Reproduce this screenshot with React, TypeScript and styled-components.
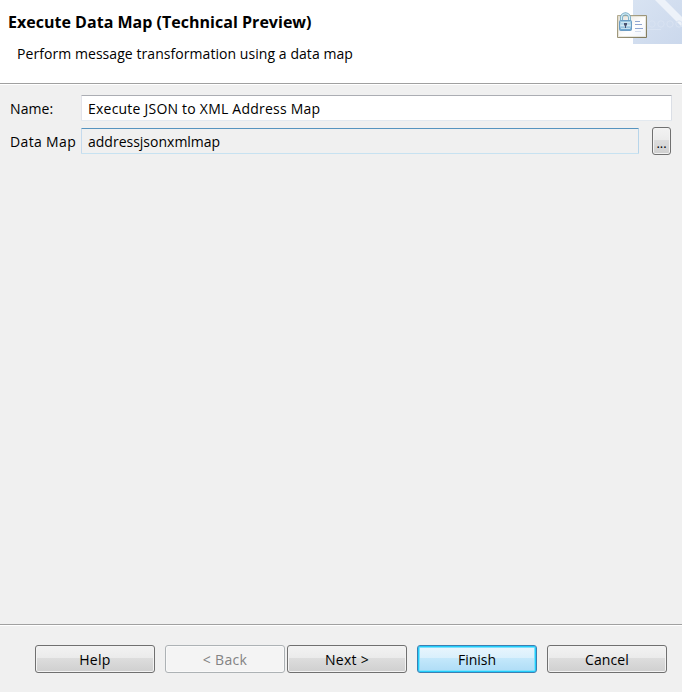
import React from "react";
import styled, { createGlobalStyle, css } from "styled-components";

const GlobalStyle = createGlobalStyle`
  * { box-sizing: border-box; }
  html, body { margin: 0; padding: 0; background: #f0f0f0; }
  body { font-family: "Open Sans", "Noto Sans", sans-serif; font-size: 14px; color: #000; overflow: hidden; }
`;

const Dialog = styled.div`
  display: flex;
  flex-direction: column;
  width: 682px;
  height: 692px;
  background: #f0f0f0;
`;

const Header = styled.header`
  display: flex;
  justify-content: space-between;
  height: 84px;
  background: #fff;
  border-bottom: 1px solid #a0a0a0;
`;

const Heading = styled.div`
  padding: 12px 0 0 8px;
`;

const Title = styled.h1`
  margin: 0;
  font-size: 16px;
  line-height: 20px;
  font-weight: 700;
  white-space: nowrap;
`;

const Subtitle = styled.p`
  margin: 12px 0 0 9px;
  line-height: 20px;
  white-space: nowrap;
`;

const Label = styled.span<{ $spacing?: number }>`
  display: inline-block;
  white-space: nowrap;
  letter-spacing: ${(p) => p.$spacing ?? 0}px;
`;

const Banner = styled.svg`
  display: block;
  width: 80px;
  height: 50px;
`;

const Form = styled.main`
  display: flex;
  flex-direction: column;
  gap: 5px;
  flex: 1;
  padding: 9px 10px 0;
  border-top: 1px solid #fff;
`;

const Row = styled.div`
  display: grid;
  grid-template-columns: 71px 1fr auto;
  align-items: center;
  height: 28px;
`;

const Field = styled.div<{ $readOnly?: boolean }>`
  height: 26px;
  padding: 1px 0 0 6px;
  line-height: 24px;
  border: 1px solid;
  border-radius: 1px;
  background: ${(p) => (p.$readOnly ? "#f0f0f0" : "#fff")};
  border-color: ${(p) =>
    p.$readOnly ? "#5794bf #b7d5ea #c7e2f1 #c5daed" : "#abadb3 #dbdfe6 #e3e9ef #e2e3ea"};
`;

const Footer = styled.footer`
  display: flex;
  height: 68px;
  padding: 20px 15px 0 35px;
  border-top: 1px solid #a0a0a0;
  box-shadow: inset 0 1px 0 #fff;
`;

const tones = {
  normal: css`
    color: #000;
    border-color: #707070;
    background: linear-gradient(#f2f2f2 0, #ebebeb 46%, #dddddd 46%, #cfcfcf 100%);
    box-shadow: inset 0 0 0 1px #f3f3f3;
  `,
  disabled: css`
    color: #838383;
    border-color: #adb2b5;
    background: #f4f4f4;
    box-shadow: inset 0 0 0 1px #f9f9f9;
  `,
  primary: css`
    color: #000;
    border-color: #3c7fb1;
    background: linear-gradient(#eaf6fd 0, #d9f0fc 46%, #c4e8fb 46%, #aedcf6 100%);
    box-shadow: inset 0 0 0 1px #22cdfb, inset 0 0 0 2px #7fe0fc;
  `,
};

const Button = styled.button<{ $tone?: keyof typeof tones; $gap?: number }>`
  width: 120px;
  height: 28px;
  margin: 0 0 0 ${(p) => p.$gap ?? 0}px;
  padding: 1px 0 0;
  font: inherit;
  line-height: 20px;
  text-align: center;
  border: 1px solid;
  border-radius: 3px;
  ${(p) => tones[p.$tone ?? "normal"]}
`;

const BrowseButton = styled(Button)`
  width: 19px;
  margin: 0 1px 0 13px;
  font-size: 13px;
  padding: 3px 0 0;
  line-height: 18px;
`;

function BannerArt() {
  return (
    <Banner viewBox="0 0 80 50" aria-hidden="true">
      <defs>
        <linearGradient id="sky" x1="0" y1="0" x2="1" y2="1">
          <stop offset="0" stopColor="#d8e3f2" />
          <stop offset="1" stopColor="#cbd8ec" />
        </linearGradient>
        <linearGradient id="card" x1="0" y1="0" x2="1" y2="1">
          <stop offset="0" stopColor="#e2dfd7" />
          <stop offset="0.55" stopColor="#fff" />
          <stop offset="1" stopColor="#eef3fb" />
        </linearGradient>
        <linearGradient id="cardEdge" x1="0" y1="0" x2="1" y2="1">
          <stop offset="0" stopColor="#b5ad92" />
          <stop offset="1" stopColor="#80795c" />
        </linearGradient>
        <linearGradient id="lock" x1="0" y1="0" x2="0" y2="1">
          <stop offset="0" stopColor="#8fc0dd" />
          <stop offset="0.5" stopColor="#c4e1f0" />
          <stop offset="1" stopColor="#5b99c8" />
        </linearGradient>
      </defs>
      <path d="M31 0H80V44H31z" fill="url(#sky)" />
      <path d="M53 0h10l17 17v10z" fill="#edf2f9" />
      <g fill="none" stroke="#d9e3f2">
        <circle cx="50" cy="24" r="3.2" />
        <circle cx="59" cy="24" r="3.2" />
        <circle cx="68" cy="24" r="3.2" />
        <circle cx="77" cy="24" r="3.2" />
        <path d="M45 29.5h14" />
      </g>
      <path d="M15.5 15.5h29v22h-29z" fill="url(#card)" stroke="url(#cardEdge)" />
      <path d="M16.5 16.5h27v20h-27z" fill="none" stroke="#d8d3c0" strokeOpacity="0.5" />
      <path d="M33 21.5h5M33 24.5h7M33 28.5h8" stroke="#91a7d2" />
      <path d="M33 31.5h6" stroke="#d5deee" />
      <path d="M19.5 21.5v-3.7a4 4 0 0 1 8 0v3.7" fill="none" stroke="#73a9c6" strokeWidth="3" />
      <path d="M19.5 21.5v-3.7a4 4 0 0 1 8 0v3.7" fill="none" stroke="#d5edf3" strokeWidth="1.3" />
      <rect x="17.5" y="20.5" width="12" height="10" rx="1" fill="url(#lock)" stroke="#6b9cc4" />
      <path d="M19 22.5h9M19 25.5h9M19 28.5h9" stroke="#dceef6" strokeOpacity="0.75" />
      <path d="M22 23h3v2l-1 1v2h-1v-2l-1-1z" fill="#4a5371" />
    </Banner>
  );
}

export default function App() {
  return (
    <>
      <GlobalStyle />
      <Dialog>
        <Header>
          <Heading>
            <Title><Label $spacing={0.02}>Execute Data Map (Technical Preview)</Label></Title>
            <Subtitle><Label $spacing={0.06}>Perform message transformation using a data map</Label></Subtitle>
          </Heading>
          <BannerArt />
        </Header>
        <Form>
          <Row>
            <Label $spacing={0.1}>Name:</Label>
            <Field><Label $spacing={0.22}>Execute JSON to XML Address Map</Label></Field>
          </Row>
          <Row>
            <Label $spacing={0.35}>Data Map</Label>
            <Field $readOnly><Label>addressjsonxmlmap</Label></Field>
            <BrowseButton>...</BrowseButton>
          </Row>
        </Form>
        <Footer>
          <Button><Label $spacing={0.3}>Help</Label></Button>
          <Button $tone="disabled" $gap={10} disabled><Label $spacing={0.3}>&lt; Back</Label></Button>
          <Button $gap={2}><Label $spacing={0.3}>Next &gt;</Label></Button>
          <Button $tone="primary" $gap={10}>Finish</Button>
          <Button $gap={10}><Label $spacing={0.1}>Cancel</Label></Button>
        </Footer>
      </Dialog>
    </>
  );
}
